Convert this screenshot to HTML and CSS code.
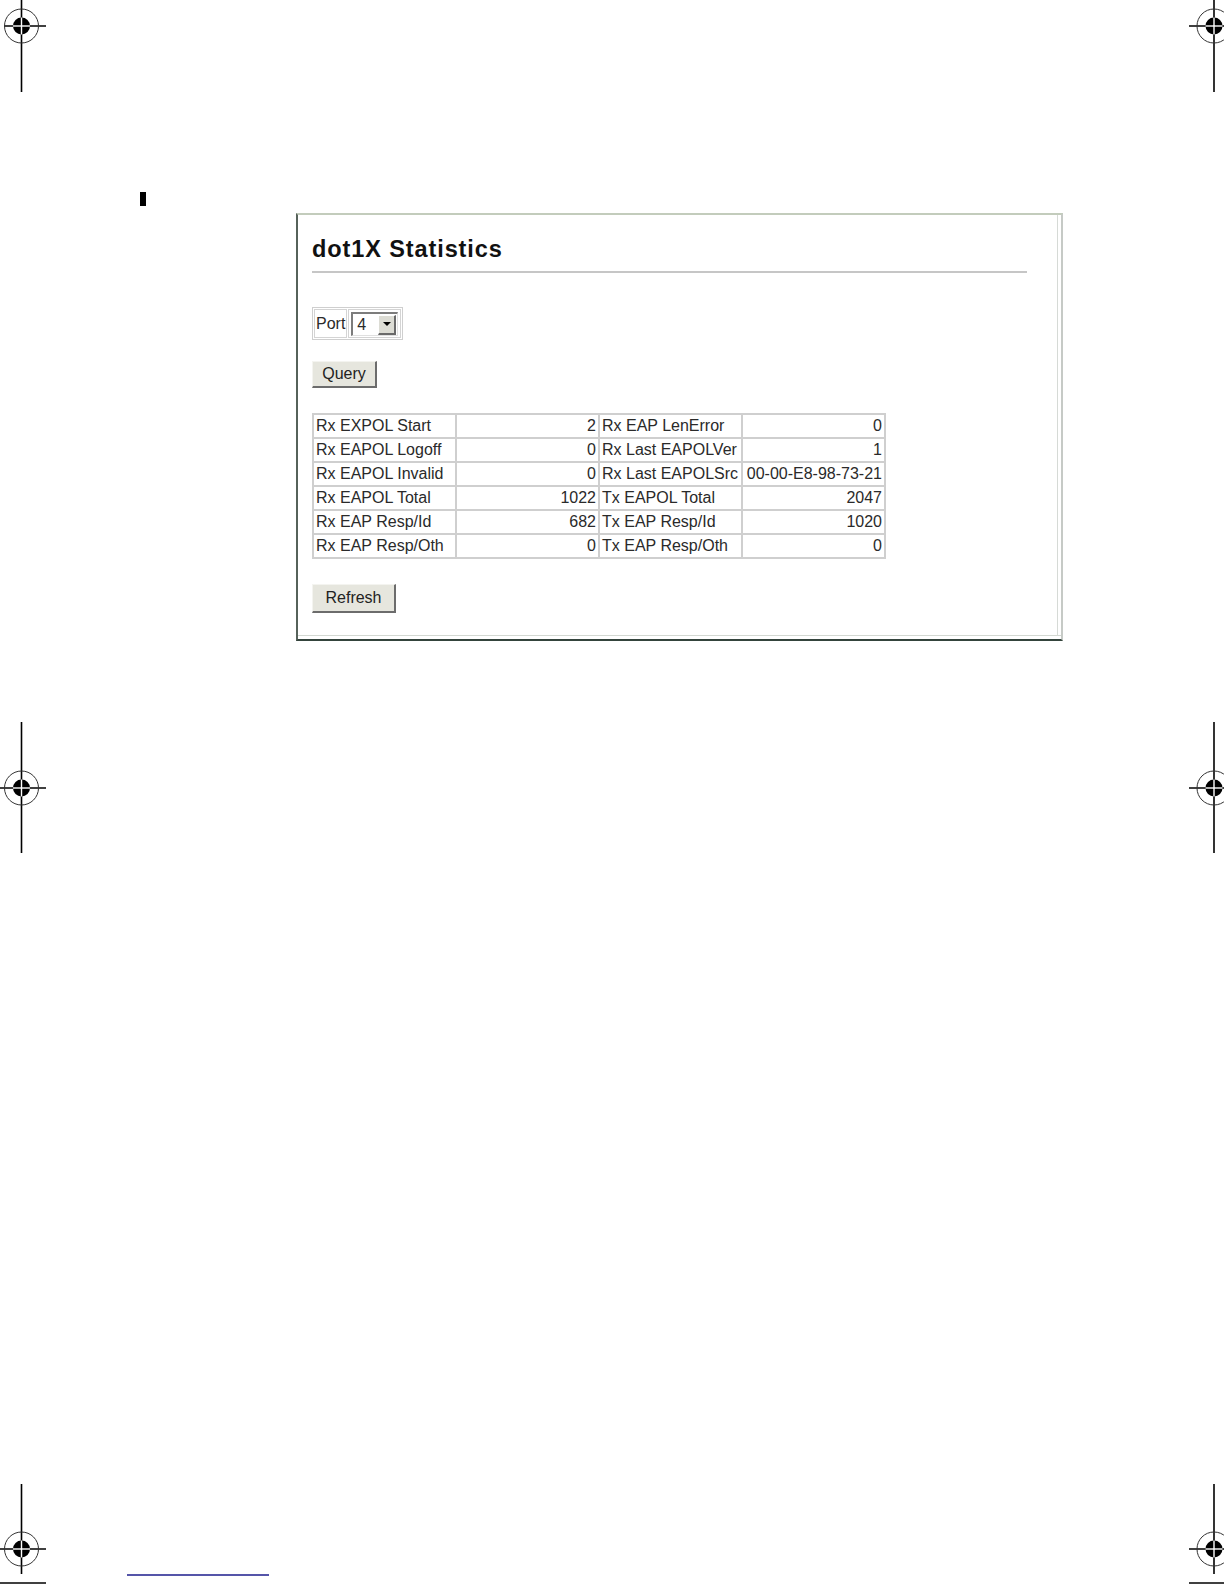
FILE: index.html
```html
<!DOCTYPE html>
<html>
<head>
<meta charset="utf-8">
<link rel="stylesheet" href="styles.css">
</head>
<body>
<div class="page">
  <svg class="marks" width="1224" height="1584" viewBox="0 0 1224 1584">
    <g stroke="#000" stroke-width="1.6" fill="none">
      <line x1="21.5" y1="0" x2="21.5" y2="92"/>
      <line x1="4" y1="26" x2="46" y2="26"/>
      <line x1="1214" y1="0" x2="1214" y2="92"/>
      <line x1="1189" y1="26" x2="1224" y2="26"/>
      <line x1="21.5" y1="722" x2="21.5" y2="853"/>
      <line x1="0" y1="788" x2="46" y2="788"/>
      <line x1="1214" y1="722" x2="1214" y2="853"/>
      <line x1="1189" y1="788" x2="1224" y2="788"/>
      <line x1="21.5" y1="1484" x2="21.5" y2="1574"/>
      <line x1="0" y1="1549" x2="46" y2="1549"/>
      <line x1="0" y1="1583" x2="46" y2="1583"/>
      <line x1="1214" y1="1484" x2="1214" y2="1574"/>
      <line x1="1189" y1="1549" x2="1224" y2="1549"/>
      <line x1="1189" y1="1583" x2="1224" y2="1583"/>
    </g>
    <g stroke="#333" stroke-width="1" fill="none">
      <circle cx="21.5" cy="26" r="17"/>
      <circle cx="1214" cy="26" r="17"/>
      <circle cx="21.5" cy="788" r="17"/>
      <circle cx="1214" cy="788" r="17"/>
      <circle cx="21.5" cy="1549" r="17"/>
      <circle cx="1214" cy="1549" r="17"/>
    </g>
    <g fill="#000">
      <circle cx="21.5" cy="26" r="8.5"/>
      <circle cx="1214" cy="26" r="8.5"/>
      <circle cx="21.5" cy="788" r="8.5"/>
      <circle cx="1214" cy="788" r="8.5"/>
      <circle cx="21.5" cy="1549" r="8.5"/>
      <circle cx="1214" cy="1549" r="8.5"/>
    </g>
    <g stroke="#fff" stroke-width="1.4">
      <line x1="21.5" y1="17.5" x2="21.5" y2="34.5"/><line x1="13" y1="26" x2="30" y2="26"/>
      <line x1="1214" y1="17.5" x2="1214" y2="34.5"/><line x1="1205.5" y1="26" x2="1222.5" y2="26"/>
      <line x1="21.5" y1="779.5" x2="21.5" y2="796.5"/><line x1="13" y1="788" x2="30" y2="788"/>
      <line x1="1214" y1="779.5" x2="1214" y2="796.5"/><line x1="1205.5" y1="788" x2="1222.5" y2="788"/>
      <line x1="21.5" y1="1540.5" x2="21.5" y2="1557.5"/><line x1="13" y1="1549" x2="30" y2="1549"/>
      <line x1="1214" y1="1540.5" x2="1214" y2="1557.5"/><line x1="1205.5" y1="1549" x2="1222.5" y2="1549"/>
    </g>
    <line x1="127" y1="1575" x2="269" y2="1575" stroke="#1c1c8c" stroke-width="1.4"/>
  </svg>
  <div class="changebar"></div>

  <div class="panel">
    <h1 class="title">dot1X Statistics</h1>
    <div class="rule"></div>

    <div class="portbox">
      <div class="portlabel">Port</div>
      <div class="portcell">
        <div class="select">
          <span class="selval">4</span>
          <span class="selbtn"><span class="tri"></span></span>
        </div>
      </div>
    </div>

    <div class="btnrow"><span class="btn btn-query">Query</span></div>

    <table class="stats">
      <tr><td class="lbl">Rx EXPOL Start</td><td class="val">2</td><td class="lbl">Rx EAP LenError</td><td class="val">0</td></tr>
      <tr><td class="lbl">Rx EAPOL Logoff</td><td class="val">0</td><td class="lbl">Rx Last EAPOLVer</td><td class="val">1</td></tr>
      <tr><td class="lbl">Rx EAPOL Invalid</td><td class="val">0</td><td class="lbl">Rx Last EAPOLSrc</td><td class="val">00-00-E8-98-73-21</td></tr>
      <tr><td class="lbl">Rx EAPOL Total</td><td class="val">1022</td><td class="lbl">Tx EAPOL Total</td><td class="val">2047</td></tr>
      <tr><td class="lbl">Rx EAP Resp/Id</td><td class="val">682</td><td class="lbl">Tx EAP Resp/Id</td><td class="val">1020</td></tr>
      <tr><td class="lbl">Rx EAP Resp/Oth</td><td class="val">0</td><td class="lbl">Tx EAP Resp/Oth</td><td class="val">0</td></tr>
    </table>

    <div class="btnrow btnrow-refresh"><span class="btn btn-refresh">Refresh</span></div>
  </div>
</div>
</body>
</html>
```

FILE: styles.css
```css
html, body {
  margin: 0;
  padding: 0;
  background: #fff;
}

.page {
  position: relative;
  width: 1224px;
  height: 1584px;
  overflow: hidden;
  padding-top: 213px;
  box-sizing: border-box;
  font-family: "Liberation Sans", Arial, sans-serif;
  color: #1a1a1a;
}

.marks {
  position: absolute;
  left: 0;
  top: 0;
  pointer-events: none;
}

.changebar {
  position: absolute;
  left: 140px;
  top: 192px;
  width: 6px;
  height: 14px;
  background: #000;
}

.panel {
  margin-left: 296px;
  width: 767px;
  height: 428px;
  box-sizing: border-box;
  border-top: 2px solid #c3ccbc;
  border-left: 2px solid #56625a;
  border-right: 2px solid #c6cac6;
  border-bottom: 2px solid #34443c;
  box-shadow: inset 0 -3px 0 #fff, inset 0 -4px 0 #d3d8d2, inset -3px 0 0 #fff, inset -4px 0 0 #d6dad6;
  padding: 20px 0 0 14px;
  background: #fff;
}

.title {
  margin: 0;
  font-size: 23.5px;
  letter-spacing: 0.9px;
  line-height: 29px;
  font-weight: bold;
  color: #111;
}

.rule {
  margin-top: 7px;
  width: 715px;
  height: 2px;
  background: #c6c6c6;
}

.portbox {
  margin-top: 34px;
  display: inline-flex;
  align-items: stretch;
  border: 1px solid #cfcfcf;
  padding: 1px;
  height: 33px;
  box-sizing: border-box;
  vertical-align: top;
}

.portlabel {
  border: 1px solid #d4d4d4;
  font-size: 16px;
  line-height: 27px;
  padding: 0 1px 0 1px;
  color: #2a2a2a;
}

.portcell {
  border: 1px solid #d4d4d4;
  padding: 2px 2px 0 2px;
  margin-left: 1px;
}

.select {
  display: flex;
  align-items: center;
  width: 47px;
  height: 24px;
  box-sizing: border-box;
  border-top: 2px solid #7c7c7c;
  border-left: 2px solid #7c7c7c;
  border-right: 1px solid #e0e0e0;
  border-bottom: 1px solid #e0e0e0;
  background: #fff;
}

.selval {
  flex: 1;
  font-size: 16px;
  padding-left: 4px;
  line-height: 20px;
  color: #2a2a2a;
}

.selbtn {
  width: 18px;
  height: 20px;
  margin-right: 1px;
  box-sizing: border-box;
  background: #dcdcd4;
  border-top: 1px solid #fff;
  border-left: 1px solid #fff;
  border-right: 2px solid #6a6a6a;
  border-bottom: 2px solid #6a6a6a;
  display: flex;
  align-items: center;
  justify-content: center;
}

.tri {
  width: 0;
  height: 0;
  border-left: 4.5px solid transparent;
  border-right: 4.5px solid transparent;
  border-top: 4.5px solid #000;
}

.btnrow {
  margin-top: 21px;
  height: 27px;
}

.btnrow-refresh {
  margin-top: 25px;
  height: 29px;
}

.btn {
  display: inline-flex;
  align-items: center;
  justify-content: center;
  box-sizing: border-box;
  background: #e6e6de;
  border-top: 1px solid #f4f4f0;
  border-left: 1px solid #f4f4f0;
  border-right: 2px solid #6c6c6c;
  border-bottom: 2px solid #6c6c6c;
  font-size: 16px;
  color: #222;
}

.btn-query {
  width: 65px;
  height: 27px;
}

.btn-refresh {
  width: 84px;
  height: 29px;
}

.stats {
  margin-top: 25px;
  border-collapse: collapse;
  font-size: 16px;
  color: #2a2a2a;
}

.stats td {
  border: 2px solid #cfcfcf;
  height: 22px;
  line-height: 22px;
  padding: 0 2px;
  white-space: nowrap;
  box-sizing: border-box;
}

.stats .lbl {
  width: 143px;
  text-align: left;
}

.stats .val {
  width: 143px;
  text-align: right;
}
```
